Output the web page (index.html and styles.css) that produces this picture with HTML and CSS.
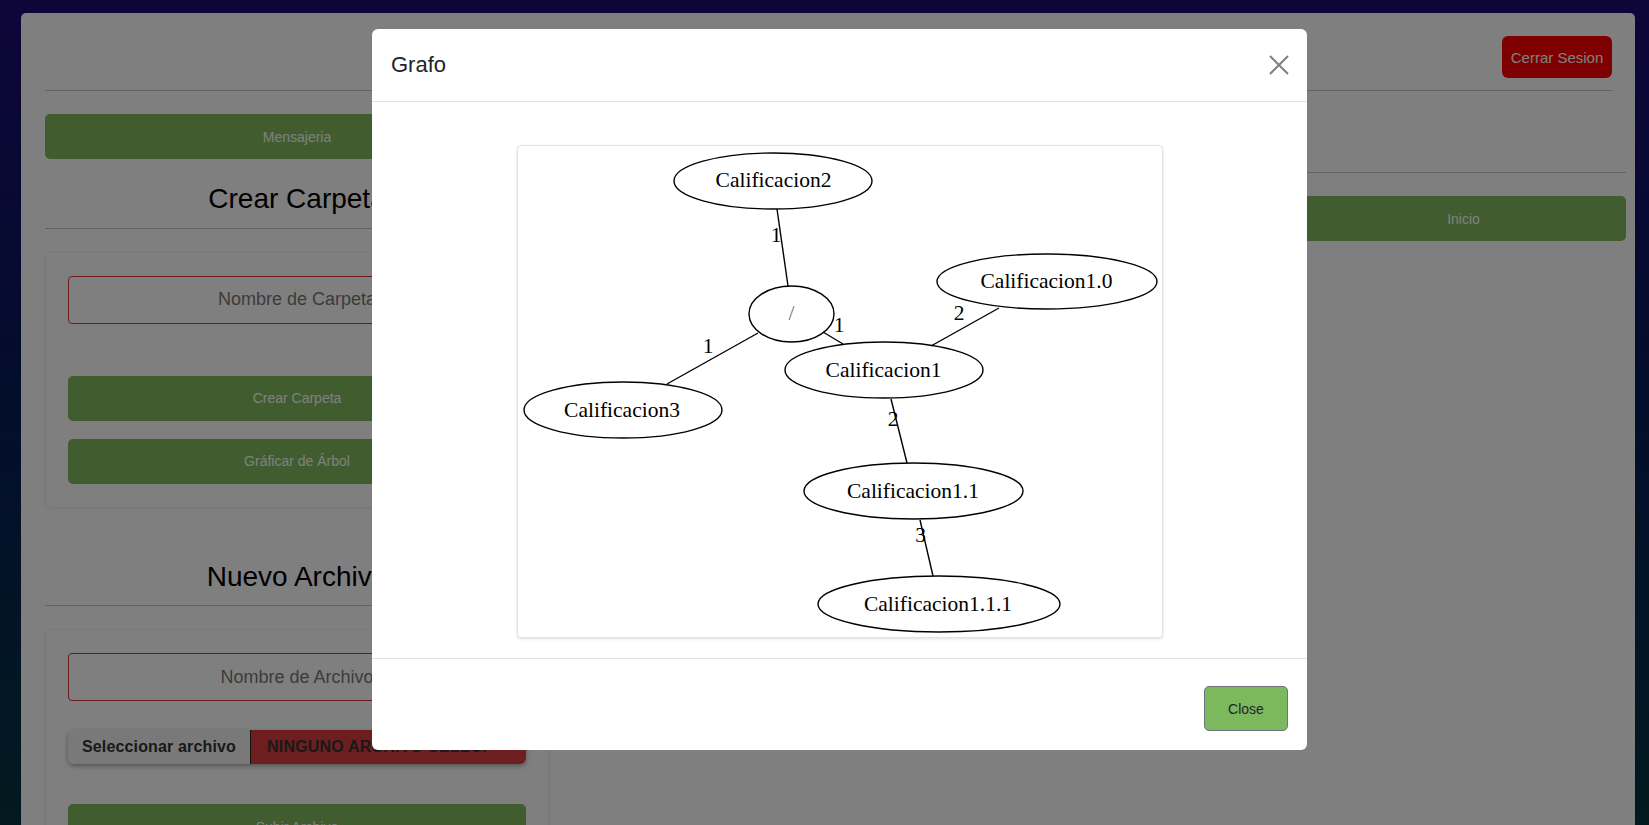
FILE: index.html
```html
<!DOCTYPE html>
<html lang="es">
<head>
<meta charset="utf-8">
<title>Grafo</title>
<link rel="stylesheet" href="styles.css">
</head>
<body>
<div class="page">
  <div class="topbar">
    <button class="btn btn-red">Cerrar Sesion</button>
  </div>
  <hr class="rule top-rule">
  <div class="main">
    <div class="col-left">
      <button class="btn btn-green btn-block first">Mensajeria</button>
      <h2 class="section-title">Crear Carpeta</h2>
      <hr class="rule title-rule">
      <div class="card">
        <input class="name-input" type="text" placeholder="Nombre de Carpeta">
        <button class="btn btn-green btn-block gap-52">Crear Carpeta</button>
        <button class="btn btn-green btn-block gap-18">Gráficar de Árbol</button>
      </div>
      <h2 class="section-title gap-52">Nuevo Archivo</h2>
      <hr class="rule title-rule">
      <div class="card">
        <input class="name-input" type="text" placeholder="Nombre de Archivo">
        <div class="file-input">
          <span class="file-btn">Seleccionar archivo</span>
          <span class="file-name">Ninguno archivo selec.</span>
        </div>
        <button class="btn btn-green btn-block gap-41">Subir Archivo</button>
      </div>
    </div>
    <div class="col-mid"></div>
    <div class="col-right">
      <hr class="rule right-rule">
      <button class="btn btn-green btn-block gap-23">Inicio</button>
    </div>
  </div>
</div>

<div class="backdrop"></div>

<div class="modal">
  <div class="modal-header">
    <h5 class="modal-title">Grafo</h5>
    <button class="btn-close" aria-label="Close">
      <svg width="20" height="20" viewBox="0 0 20 20"><path d="M1 1 L19 19 M19 1 L1 19" stroke="#808080" stroke-width="2" fill="none"/></svg>
    </button>
  </div>
  <div class="modal-body">
    <div class="graph-box">
      <svg class="graph" width="644" height="491" viewBox="0 0 644 491">
        <g class="edges">
          <line x1="259" y1="63" x2="270" y2="140"/>
          <line x1="240" y1="187" x2="149" y2="238"/>
          <line x1="305" y1="186" x2="325" y2="198"/>
          <line x1="413" y1="200" x2="481" y2="162"/>
          <line x1="373" y1="253" x2="389" y2="317"/>
          <line x1="402" y1="374" x2="415" y2="430"/>
        </g>
        <g class="nodes">
          <ellipse cx="255" cy="35" rx="99" ry="28"/>
          <ellipse cx="273.5" cy="168" rx="42.5" ry="28"/>
          <ellipse cx="105" cy="264" rx="99" ry="28"/>
          <ellipse cx="366" cy="224" rx="99" ry="28"/>
          <ellipse cx="529" cy="135.5" rx="110" ry="27.5"/>
          <ellipse cx="395.5" cy="345" rx="109.5" ry="28"/>
          <ellipse cx="421" cy="458" rx="121" ry="28"/>
        </g>
        <g class="labels">
          <text x="255.5" y="41">Calificacion2</text>
          <text class="slash" x="273.5" y="174">/</text>
          <text x="104" y="271">Calificacion3</text>
          <text x="365.5" y="231">Calificacion1</text>
          <text x="528.5" y="142">Calificacion1.0</text>
          <text x="395" y="352">Calificacion1.1</text>
          <text x="420" y="465">Calificacion1.1.1</text>
          <text x="258" y="96">1</text>
          <text x="190" y="207">1</text>
          <text x="321" y="186">1</text>
          <text x="441" y="174">2</text>
          <text x="375" y="280">2</text>
          <text x="402.5" y="396">3</text>
        </g>
      </svg>
    </div>
  </div>
  <div class="modal-footer">
    <button class="btn-close-footer">Close</button>
  </div>
</div>
</body>
</html>
```

FILE: styles.css
```css
html, body {
  margin: 0;
  padding: 0;
  height: 100%;
  overflow: hidden;
}

body {
  font-family: "Liberation Sans", Arial, sans-serif;
  background: linear-gradient(180deg, #1c0b72 0%, #071a5a 45%, #04343f 100%);
  color: #000;
}

.page {
  margin: 13px 14px 0 21px;
  background: #fff;
  border-radius: 5px;
  padding: 23px 9px 0 24px;
  height: 900px;
  box-sizing: border-box;
}

.topbar {
  display: flex;
  justify-content: flex-end;
  margin-right: 14px;
}

.btn {
  font-family: "Liberation Sans", Arial, sans-serif;
  font-size: 14px;
  border: none;
  cursor: pointer;
}

.btn-red {
  background: #ff0000;
  color: #fff;
  width: 110px;
  height: 42px;
  border-radius: 6px;
  font-size: 15px;
}

.btn-green {
  background: #82ba5e;
  color: #fff;
  height: 45px;
  border-radius: 5px;
}

.btn-block {
  display: block;
  width: 100%;
}

.rule {
  border: none;
  border-top: 1px solid #c4c4c4;
  margin: 0;
}

.top-rule {
  margin: 12px 14px 0 0;
}

.main {
  display: grid;
  grid-template-columns: 504px 1fr 325px;
}

.col-left {
  display: flex;
  flex-direction: column;
}

.first {
  margin-top: 23px;
}

.section-title {
  font-size: 28px;
  font-weight: normal;
  line-height: 1.2;
  text-align: center;
  margin: 23px 0 0;
}

.section-title.gap-52 {
  margin-top: 52px;
}

.title-rule {
  margin-top: 12px;
}

.card {
  margin-top: 23px;
  border: 1px solid #f0f0f0;
  border-radius: 5px;
  box-shadow: 0 1px 4px rgba(0, 0, 0, 0.06);
  padding: 23px 22px 23px 22px;
  display: flex;
  flex-direction: column;
}

.name-input {
  box-sizing: border-box;
  height: 48px;
  width: 100%;
  border: 1px solid #d93636;
  border-radius: 4px;
  background: #fff;
  text-align: center;
  font-family: "Liberation Sans", Arial, sans-serif;
  font-size: 18px;
  color: #333;
  padding: 0 10px;
}

.name-input::placeholder {
  color: #777;
}

.gap-52 { margin-top: 52px; }
.gap-18 { margin-top: 18px; }
.gap-41 { margin-top: 40px; }
.gap-23 { margin-top: 23px; }

.file-input {
  margin-top: 29px;
  height: 34px;
  display: flex;
  border-radius: 6px;
  overflow: hidden;
  box-shadow: 0 2px 5px rgba(0, 0, 0, 0.35);
  font-weight: bold;
  font-size: 16px;
  line-height: 34px;
  color: #333;
}

.file-btn {
  flex: 0 0 182px;
  background: #f2f2f2;
  text-align: center;
  border-right: 1px solid #222;
  letter-spacing: 0.15px;
}

.file-name {
  flex: 1;
  background: #dd3c3c;
  padding-left: 16px;
  text-transform: uppercase;
  white-space: nowrap;
  overflow: hidden;
  letter-spacing: 0.2px;
}

.col-right {
  display: flex;
  flex-direction: column;
}

.right-rule {
  margin-top: 81px;
}

.backdrop {
  position: fixed;
  inset: 0;
  background: rgba(0, 0, 0, 0.5);
}

.modal {
  position: fixed;
  left: 372px;
  top: 29px;
  width: 935px;
  background: #fff;
  border-radius: 6px;
  display: flex;
  flex-direction: column;
}

.modal-header {
  height: 72px;
  display: flex;
  align-items: center;
  justify-content: space-between;
  padding: 0 18px 0 19px;
  border-bottom: 1px solid #dee2e6;
}

.modal-title {
  margin: 0;
  font-size: 22px;
  font-weight: normal;
  color: #212529;
}

.btn-close {
  background: none;
  border: none;
  padding: 0;
  width: 20px;
  height: 20px;
  display: flex;
  cursor: pointer;
}

.modal-body {
  padding: 43px 0 20px;
  display: flex;
  justify-content: center;
}

.graph-box {
  width: 644px;
  height: 491px;
  border: 1px solid #e3e3e3;
  border-radius: 4px;
  box-shadow: 0 1px 3px rgba(0, 0, 0, 0.12);
  background: #fff;
}

.graph {
  display: block;
}

.graph .edges line {
  stroke: #000;
  stroke-width: 1.4;
}

.graph .nodes ellipse {
  fill: none;
  stroke: #000;
  stroke-width: 1.4;
}

.graph text {
  font-family: "Liberation Serif", "Times New Roman", serif;
  font-size: 21.5px;
  text-anchor: middle;
  fill: #000;
}

.graph text.slash {
  fill: #777;
}

.modal-footer {
  border-top: 1px solid #dee2e6;
  display: flex;
  justify-content: flex-end;
  padding: 27px 19px 19px;
}

.btn-close-footer {
  width: 84px;
  height: 45px;
  background: #7cb85e;
  border: 1px solid #6c757d;
  border-radius: 5px;
  font-family: "Liberation Sans", Arial, sans-serif;
  font-size: 14px;
  color: #212529;
  cursor: pointer;
}
```
